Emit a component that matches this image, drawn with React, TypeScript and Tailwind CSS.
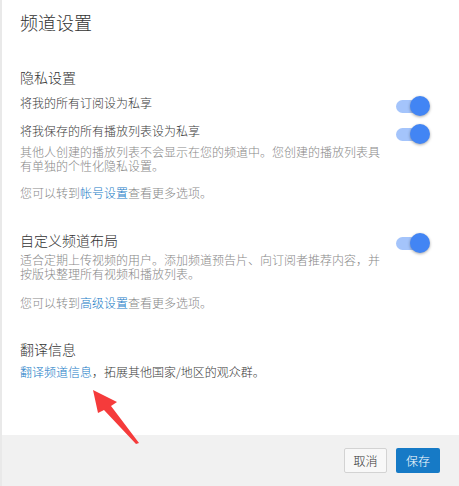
import React from "react";

function Toggle() {
  return (
    <div className="relative top-[3px] h-[20px] w-[34px] shrink-0">
      <div className="absolute left-0 top-[4px] h-[13px] w-[30px] rounded-full bg-[#a4c4fb]" />
      <div className="absolute right-0 top-0 h-[20px] w-[20px] rounded-full bg-[#4285f4] shadow-[0_1px_3px_rgba(0,0,0,0.35)]" />
    </div>
  );
}

function Row({ label }: { label: string }) {
  return (
    <div className="flex h-[20px] items-center justify-between">
      <span className="text-[12px] leading-[20px] text-[#3a3a3a]">{label}</span>
      <Toggle />
    </div>
  );
}

export default function App() {
  return (
    <div
      className="relative flex h-[486px] w-[459px] overflow-hidden bg-white font-light"
      style={{ fontFamily: '"Noto Sans CJK SC", "Noto Sans", sans-serif' }}
    >
      <div className="w-[2px] shrink-0 bg-[#e9e9e9]" />
      <div className="flex flex-1 flex-col">
        <div className="flex-1 pl-[18px] pr-[29px] pt-[10px]">
          <h1 className="text-[18px] font-light leading-[24px] text-[#333]">
            频道设置
          </h1>

          <h2 className="mt-[33px] text-[14px] font-light leading-[20px] text-[#333]">
            隐私设置
          </h2>
          <div className="mt-[6px]">
            <Row label="将我的所有订阅设为私享" />
          </div>
          <div className="mt-[8px]">
            <Row label="将我保存的所有播放列表设为私享" />
          </div>
          <p className="mt-[4px] w-[362px] text-[12px] leading-[14px] text-[#888]">
            其他人创建的播放列表不会显示在您的频道中。您创建的播放列表具有单独的个性化隐私设置。
          </p>
          <p className="mt-[10px] text-[12px] leading-[20px] text-[#888]">
            您可以转到<span className="text-[#167ac6]">帐号设置</span>查看更多选项。
          </p>

          <div className="mt-[27px] flex h-[20px] items-center justify-between">
            <h2 className="text-[14px] font-light leading-[20px] text-[#333]">
              自定义频道布局
            </h2>
            <Toggle />
          </div>
          <p className="mt-[3px] w-[362px] text-[12px] leading-[14px] text-[#888]">
            适合定期上传视频的用户。添加频道预告片、向订阅者推荐内容，并按版块整理所有视频和播放列表。
          </p>
          <p className="mt-[12px] text-[12px] leading-[20px] text-[#888]">
            您可以转到<span className="text-[#167ac6]">高级设置</span>查看更多选项。
          </p>

          <h2 className="mt-[26px] text-[14px] font-light leading-[20px] text-[#333]">
            翻译信息
          </h2>
          <p className="mt-[3px] text-[12px] leading-[20px] text-[#3a3a3a]">
            <span className="text-[#167ac6]">翻译频道信息</span>，拓展其他国家/地区的观众群。
          </p>
        </div>

        <div className="flex h-[51px] items-center justify-end gap-[9px] bg-[#f1f1f1] pr-[19px]">
          <button className="h-[25px] w-[43px] rounded-[2px] border border-[#d3d3d3] bg-[#f8f8f8] text-[12px] text-[#333]">
            取消
          </button>
          <button className="h-[25px] w-[44px] rounded-[2px] bg-[#167ac6] text-[12px] text-white">
            保存
          </button>
        </div>
      </div>

      <svg
        className="pointer-events-none absolute left-0 top-0"
        width="459"
        height="486"
        viewBox="0 0 459 486"
      >
        <polygon
          points="93,390 117,402 111,406 139,443 136,444 104,410 98,413"
          fill="#f53b3b"
        />
      </svg>
    </div>
  );
}
